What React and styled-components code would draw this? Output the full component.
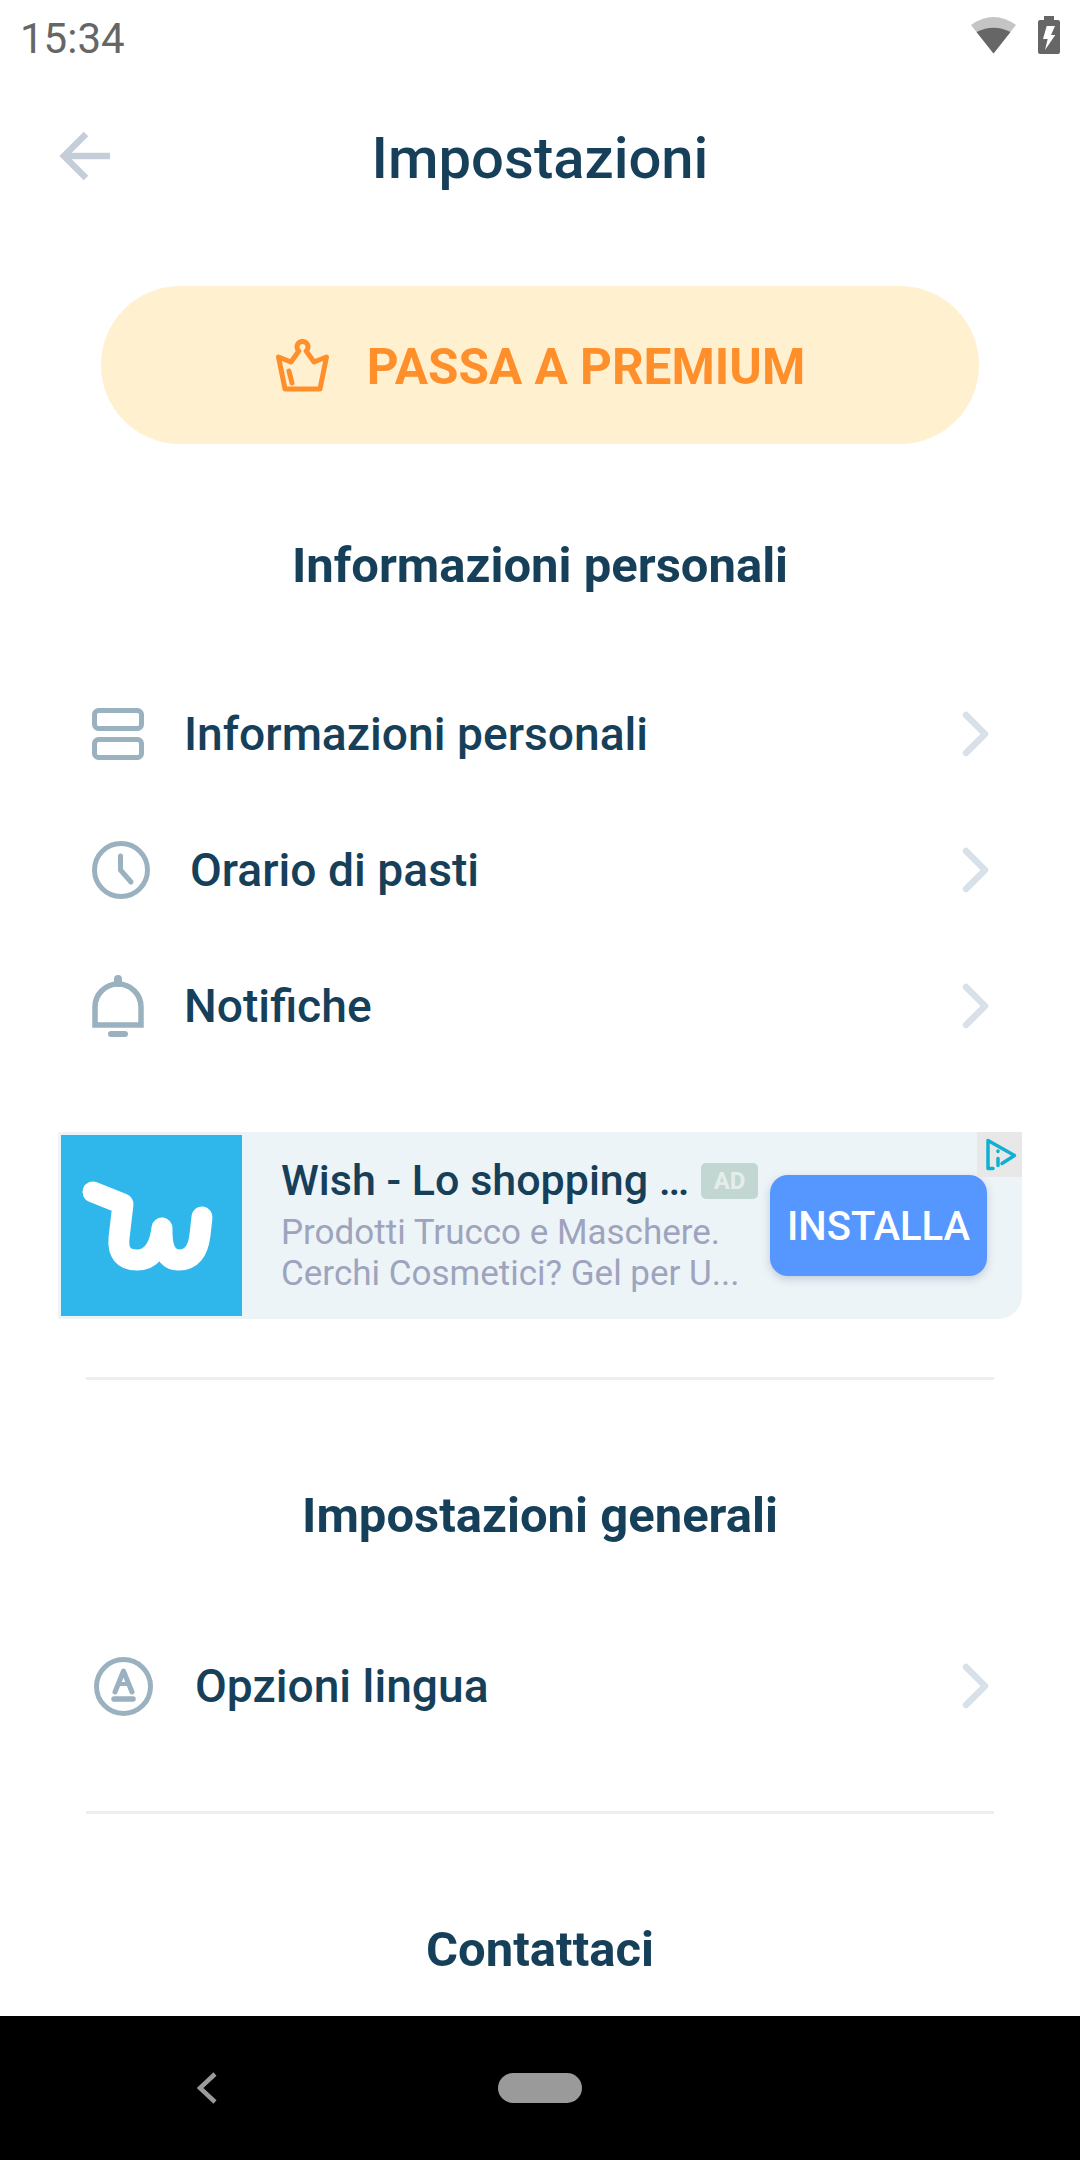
import styled, { createGlobalStyle } from "styled-components";

const GlobalStyle = createGlobalStyle`
    html, body {
        margin: 0;
        padding: 0;
        background: #fff;
        font-family: Roboto, "Liberation Sans", sans-serif;
    }
`

const Screen = styled.div`
    width: 1080px;
    height: 2160px;
    display: flex;
    flex-direction: column;
    overflow: hidden;
    background: #fff;
    color: #163f5a;
`
const Content = styled.main`
    flex: 1;
    overflow: hidden;
`
const StatusBar = styled.div`
    height: 76px;
    display: flex;
    align-items: center;
    justify-content: space-between;
    padding: 0 20px;
    color: #666;
    font-size: 42px;
`
const StatusIcons = styled.div`
    display: flex;
    align-items: center;
    gap: 22px;
    margin-bottom: 6px;
`
const Header = styled.header`
    position: relative;
    height: 164px;
    display: flex;
    align-items: center;
    justify-content: center;
`
const BackIcon = styled.svg`
    position: absolute;
    left: 58px;
    top: 54px;
`
const Title = styled.h1`
    margin: 0;
    font-size: 58px;
    font-weight: 500;
`
const PremiumButton = styled.button`
    display: flex;
    align-items: center;
    justify-content: center;
    gap: 37px;
    width: 878px;
    height: 158px;
    margin: 46px 0 0 101px;
    padding: 0;
    border: 0;
    border-radius: 79px;
    background: #fff0d0;
    color: #ff8f2b;
    font-family: inherit;
    font-size: 49.5px;
    font-weight: 700;
`
const PremiumLabel = styled.span`
    padding-top: 3px;
`
const SectionTitle = styled.h2`
    height: 100px;
    margin: ${(p) => p.$top}px 0 0;
    display: flex;
    align-items: center;
    justify-content: center;
    font-size: 49px;
    font-weight: 700;
`
const List = styled.div`
    margin-top: ${(p) => p.$top}px;
`
const Row = styled.div`
    height: 136px;
    display: flex;
    align-items: center;
    gap: 40px;
    padding: 0 90px 0 92px;
    font-size: 46.2px;
    font-weight: 500;
`
const RowLabel = styled.span`
    flex: 1;
`
const AdCard = styled.div`
    position: relative;
    width: 964px;
    height: 187px;
    box-sizing: border-box;
    margin: 58px 0 0 58px;
    padding: 3px;
    display: flex;
    align-items: center;
    background: #edf4f8;
    border-radius: 0 0 24px 0;
`
const AdLogo = styled.div`
    width: 181px;
    height: 181px;
    flex: none;
    background: #2fb7ec;
`
const AdText = styled.div`
    width: 477px;
    margin-left: 39px;
`
const AdHeading = styled.div`
    display: flex;
    align-items: center;
    justify-content: space-between;
    white-space: nowrap;
    font-size: 43px;
    font-weight: 500;
    line-height: 50px;
`
const AdTitle = styled.span`
    margin-top: -2px;
`
const AdBadge = styled.span`
    width: 57px;
    height: 36px;
    display: flex;
    align-items: center;
    justify-content: center;
    border-radius: 5px;
    background: #c3d7d2;
    color: #e3eeeb;
    font-size: 24px;
    font-weight: 700;
`
const AdDescription = styled.div`
    margin-top: 7px;
    color: #9ea4bd;
    font-size: 35px;
    line-height: 41px;
    white-space: nowrap;
`
const InstallButton = styled.button`
    width: 217px;
    height: 101px;
    margin-left: 12px;
    padding: 2px 0 0;
    border: 0;
    border-radius: 18px;
    background: #5596ff;
    color: #fff;
    font-family: inherit;
    font-size: 40px;
    font-weight: 500;
    box-shadow: 0 3px 8px rgba(60, 80, 110, 0.25);
`
const AdInfo = styled.div`
    position: absolute;
    top: 0;
    right: 0;
    width: 45px;
    height: 45px;
    display: flex;
    align-items: center;
    justify-content: center;
    background: #e8e8e8;
`
const Divider = styled.hr`
    width: 908px;
    height: 3px;
    margin: ${(p) => p.$top}px 0 0 86px;
    border: 0;
    background: #eceef1;
`
const NavBar = styled.nav`
    height: 144px;
    flex: none;
    display: flex;
    align-items: center;
    gap: 281px;
    padding-left: 197px;
    background: #000;
`
const HomePill = styled.div`
    width: 84px;
    height: 30px;
    border-radius: 15px;
    background: #9a9a9a;
`

function Chevron() {
    return (
        <svg width="30" height="46" viewBox="0 0 30 46" fill="none" stroke="#d8e0e9" strokeWidth="6.5" strokeLinecap="round" strokeLinejoin="round">
            <path d="M6 4 L25 23 L6 42" />
        </svg>
    )
}

function ListIcon() {
    return (
        <svg width="52" height="52" viewBox="0 0 52 52" fill="none" stroke="#9ab1c0" strokeWidth="5">
            <rect x="2.5" y="2.5" width="47" height="18" rx="4" />
            <rect x="2.5" y="31.5" width="47" height="18" rx="4" />
        </svg>
    )
}

function ClockIcon() {
    return (
        <svg width="58" height="58" viewBox="0 0 58 58" fill="none" stroke="#9ab1c0" strokeWidth="5" strokeLinecap="round" strokeLinejoin="round">
            <circle cx="29" cy="29" r="26.5" />
            <path d="M28.5 15 V29 L39 41" />
        </svg>
    )
}

function BellIcon() {
    return (
        <svg width="52" height="62" viewBox="0 0 52 62" fill="none" stroke="#9ab1c0" strokeWidth="5.5">
            <path d="M3 50 V32 A23 23 0 0 1 49 32 V50 Z" />
            <path d="M26 4 V8" strokeWidth="8" strokeLinecap="round" />
            <path d="M19 59 H33" strokeWidth="6" strokeLinecap="round" />
        </svg>
    )
}

function LanguageIcon() {
    return (
        <svg width="63" height="59" viewBox="0 0 63 59" fill="none" stroke="#9ab1c0" strokeWidth="5" strokeLinecap="round" strokeLinejoin="round">
            <circle cx="31.5" cy="29.5" r="27" />
            <path d="M23 35 L31.5 14 L40 35" />
            <path d="M26 27 H37" strokeWidth="4" />
            <path d="M22 42 H41" strokeWidth="5.5" />
        </svg>
    )
}

function CrownIcon() {
    return (
        <svg width="55" height="53" viewBox="0 0 55 53" fill="none" stroke="#ff8f2b" strokeWidth="5" strokeLinecap="round" strokeLinejoin="round">
            <path d="M3.5 18 L16 23 L23.8 12 A5.5 5.5 0 1 1 31.2 12 L39 23 L51.5 18 L45 50 H10 Z" />
            <path d="M14 32 L17 44" />
        </svg>
    )
}

function WishLogo() {
    return (
        <svg width="181" height="181" viewBox="0 0 181 181" fill="none" stroke="#fff" strokeWidth="21" strokeLinecap="round" strokeLinejoin="round">
            <path d="M32 57 L62 69 L58 103 Q56 125 76 125 Q97 125 101 93 Q100 125 118 125 Q136 125 139 100 L141 82" />
        </svg>
    )
}

export default function App() {
    return (
        <Screen>
            <GlobalStyle />
            <Content>
                <StatusBar>
                    <span>15:34</span>
                    <StatusIcons>
                        <svg width="45" height="37" viewBox="0 0 45 37">
                            <path d="M0 8 Q22.5 -8 45 8 L22.5 36.5 Z" fill="#c4c4c4" />
                            <path d="M5.5 15 Q22.5 6.4 39.5 15 L22.5 36.5 Z" fill="#666" />
                        </svg>
                        <svg width="22" height="38" viewBox="0 0 22 38">
                            <path d="M6 0 H16 V4 H20 Q22 4 22 6 V36 Q22 38 20 38 H2 Q0 38 0 36 V6 Q0 4 2 4 H6 Z" fill="#666" />
                            <path d="M8.7 10 H17 L13 19 H17.3 L7 34 L9.7 23 H5 Z" fill="#fff" />
                        </svg>
                    </StatusIcons>
                </StatusBar>
                <Header>
                    <BackIcon width="54" height="54" viewBox="0 0 54 54" fill="none" stroke="#c5ced8" strokeWidth="6.5">
                        <path d="M28 4 L6 26 L28 48" />
                        <path d="M6 26 H52" />
                    </BackIcon>
                    <Title>Impostazioni</Title>
                </Header>
                <PremiumButton>
                    <CrownIcon />
                    <PremiumLabel>PASSA A PREMIUM</PremiumLabel>
                </PremiumButton>
                <SectionTitle $top={71}>Informazioni personali</SectionTitle>
                <List $top={51}>
                    <Row><ListIcon /><RowLabel>Informazioni personali</RowLabel><Chevron /></Row>
                    <Row><ClockIcon /><RowLabel>Orario di pasti</RowLabel><Chevron /></Row>
                    <Row><BellIcon /><RowLabel>Notifiche</RowLabel><Chevron /></Row>
                </List>
                <AdCard>
                    <AdLogo><WishLogo /></AdLogo>
                    <AdText>
                        <AdHeading>
                            <AdTitle>Wish - Lo shopping …</AdTitle>
                            <AdBadge>AD</AdBadge>
                        </AdHeading>
                        <AdDescription>Prodotti Trucco e Maschere.<br />Cerchi Cosmetici? Gel per U...</AdDescription>
                    </AdText>
                    <InstallButton>INSTALLA</InstallButton>
                    <AdInfo>
                        <svg width="34" height="34" viewBox="0 0 34 34" fill="none" stroke="#12b0d0" strokeWidth="3.5" strokeLinecap="round" strokeLinejoin="round">
                            <path d="M10 30.5 H5 V2.5 L31.5 17.5 L19 25.5" />
                            <path d="M15 13 V13.5 M15 20.5 V27.5" />
                        </svg>
                    </AdInfo>
                </AdCard>
                <Divider $top={58} />
                <SectionTitle $top={85}>Impostazioni generali</SectionTitle>
                <List $top={53}>
                    <Row><LanguageIcon /><RowLabel>Opzioni lingua</RowLabel><Chevron /></Row>
                </List>
                <Divider $top={57} />
                <SectionTitle $top={85}>Contattaci</SectionTitle>
            </Content>
            <NavBar>
                <svg width="20" height="32" viewBox="0 0 20 32" fill="none" stroke="#9a9a9a" strokeWidth="4.5">
                    <path d="M18 2 L3 16 L18 30" />
                </svg>
                <HomePill />
            </NavBar>
        </Screen>
    )
}
